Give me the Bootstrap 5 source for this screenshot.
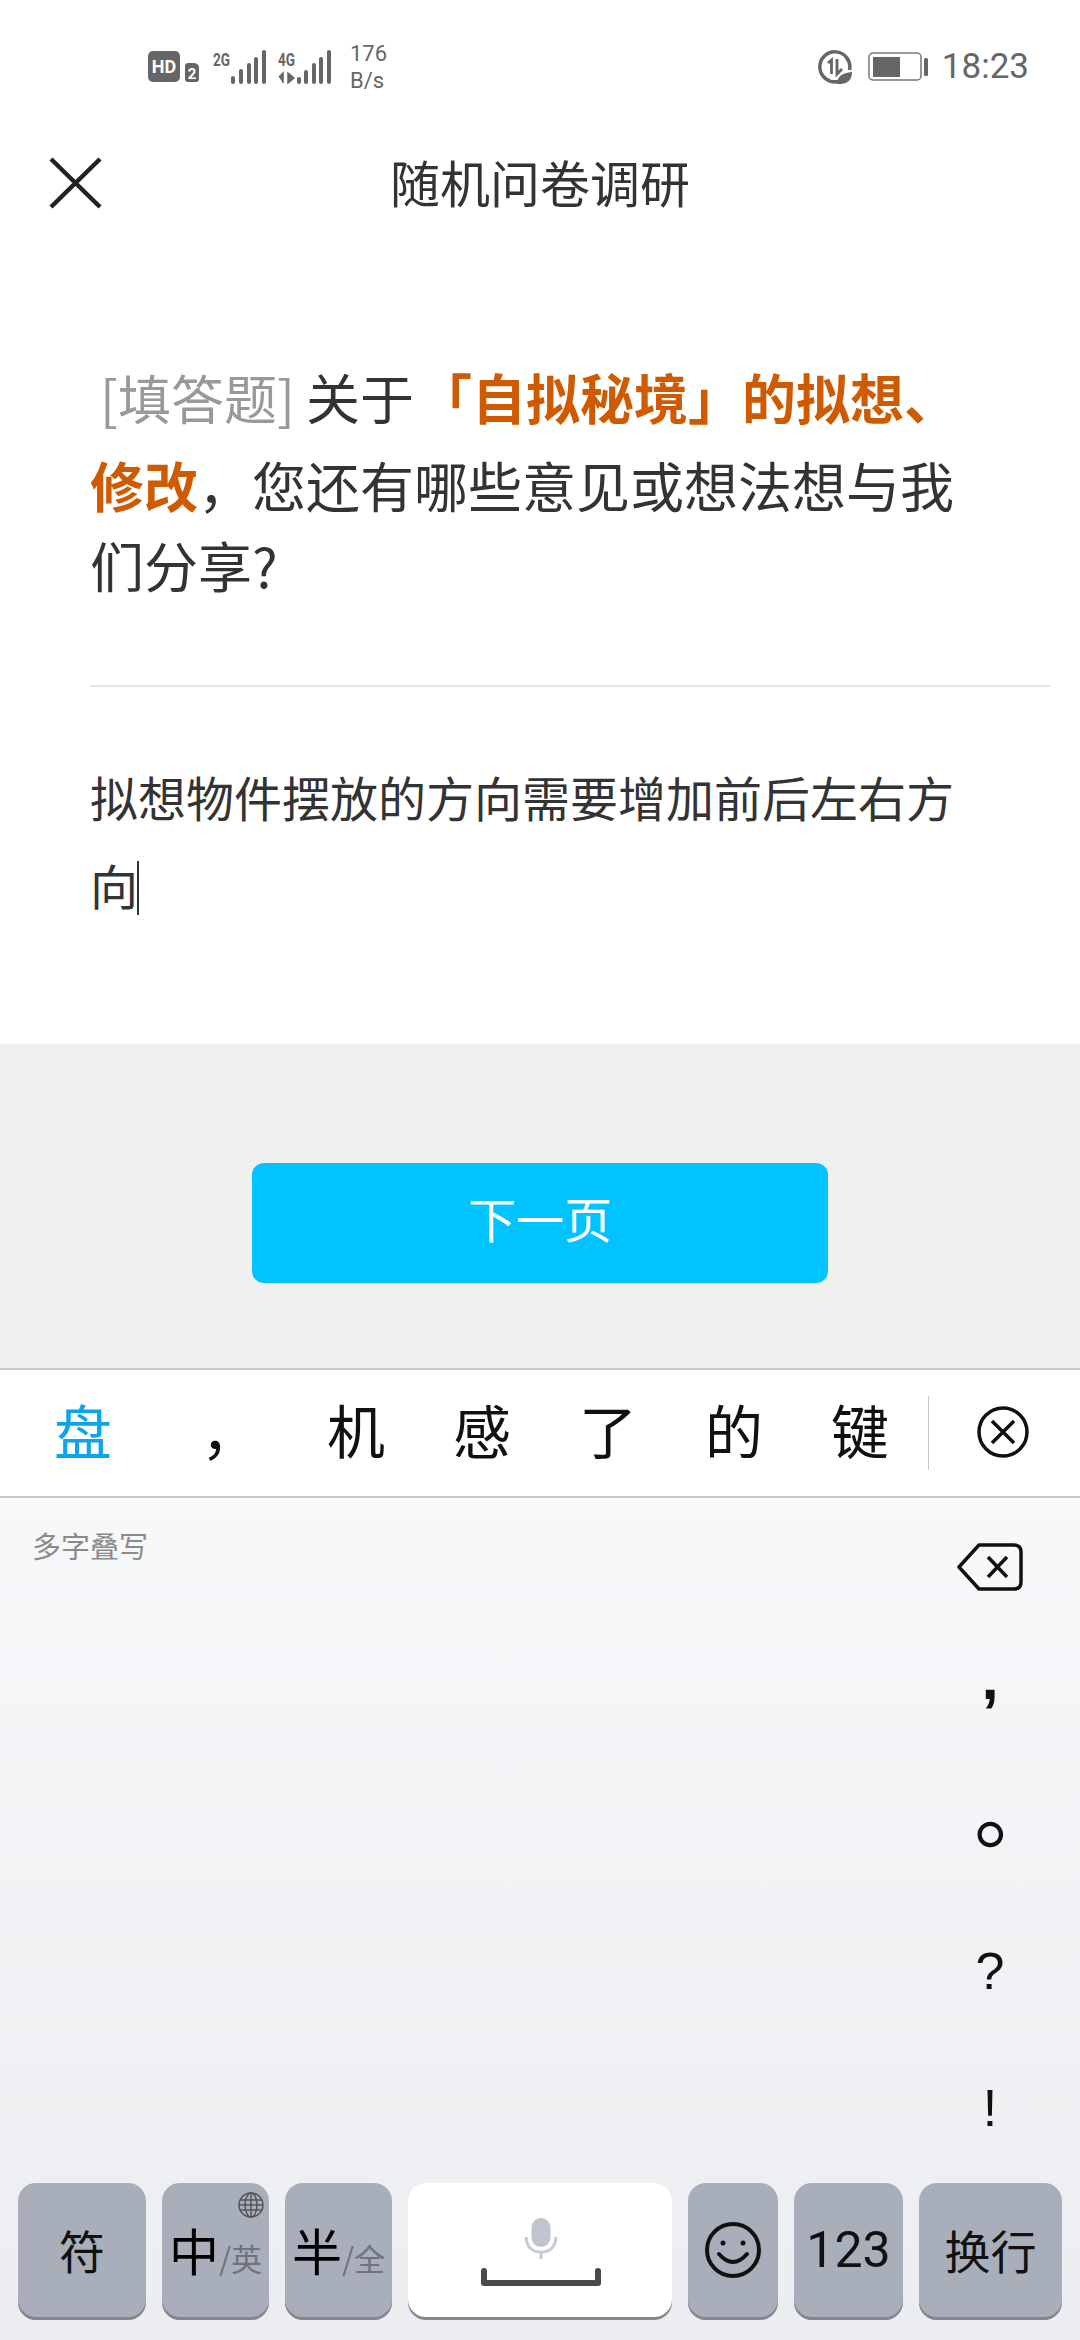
<!DOCTYPE html>
<html lang="zh">
<head>
  <meta charset="UTF-8">
  <meta name="viewport" content="width=device-width, initial-scale=1.0">
  <title>随机问卷调研</title>
  <link href="https://cdn.jsdelivr.net/npm/bootstrap@5.3.0/dist/css/bootstrap.min.css" rel="stylesheet">
  <style>
    html, body { width: 1080px; height: 2340px; overflow: hidden; }
    body { font-family: "Noto Sans CJK SC", "Liberation Sans", sans-serif; background: #fff; color: #333; }
    .status-row { height: 90px; padding: 44px 51px 0 148px; color: #666; }
    .net-speed { font: 22px/27px Roboto, sans-serif; width: 50px; margin-left: 19px; }
    .clock { font: 35px/40px Roboto, sans-serif; margin-left: 14px; }
    .head-row { height: 266px; padding: 0 0 0 48px; align-items: flex-start; position: relative; }
    .head-title { font-size: 50px; line-height: 60px; position: absolute; left: 0; right: 0; top: 61px; text-align: center; color: #333; }
    .close-ico { margin-top: 67px; }
    .quiz-text { font-size: 54px; line-height: 88px; width: 900px; margin-left: 90px; height: 329px; margin-top: -3px; margin-bottom: 3px; }
    .first-line { word-spacing: -1px; }
    .tag-gray { color: #999; padding-left: 10px; font-size: 53px; }
    .tag-hot { color: #cf5a00; font-weight: 700; }
    .hot-lead { margin-left: -7px; }
    .last-line { display: block; margin-top: -8px; }
    .split-line { height: 2px; background: #e6e6e6; margin: 0 30px 0 90px; }
    .answer-box { height: 357px; padding: 65px 0 0 90px; font-size: 48px; line-height: 88px; }
    .caret-bar { display: inline-block; width: 2px; height: 54px; background: #333; vertical-align: -10px; margin-left: -1px; }
    .action-zone { height: 324px; background: #f0f0f0; padding-top: 119px; }
    .next-btn { width: 576px; height: 120px; background: #00c3ff; color: #fff; border: 0; border-radius: 12px; font-size: 48px; line-height: 1; padding-bottom: 18px; }
    .cand-row { height: 130px; background: #fff; border-top: 2px solid #c8c8c8; border-bottom: 2px solid #c8c8c8; padding-left: 20px; }
    .cand-word { width: 126px; text-align: center; font-size: 58px; line-height: 118px; height: 126px; color: #111; }
    .cand-first { color: #0aa5ee; margin-right: 21px; }
    .cand-sep { width: 1px; height: 74px; background: #c8c8c8; margin-left: 5px; }
    .cand-close { margin-left: 48px; margin-top: -2px; }
    .kb-zone { height: 842px; background: linear-gradient(#f7f8fa, #ecedf0); position: relative; }
    .hint-label { font-size: 29px; line-height: 34px; color: #8a8a8a; padding: 30px 0 0 32px; }
    .punct-col { position: absolute; top: 0; right: 0; width: 180px; text-align: center; }
    .punct-item { height: 137px; font: 52px/137px "Liberation Sans", sans-serif; color: #111; }
    .punct-comma { font-weight: 700; font-size: 62px; line-height: 86px; }
    .punct-stop { font-family: "Noto Sans CJK SC", sans-serif; font-size: 84px; line-height: 68px; padding-left: 52px; }
    .punct-ask, .punct-bang { line-height: 124px; }
    .key-row { position: absolute; left: 18px; top: 685px; gap: 16px; }
    .kb-key { height: 137px; background: #a8afbb; border-radius: 18px; box-shadow: inset 0 -3px 0 #85878d; font-size: 46px; color: #111; position: relative; padding-bottom: 4px; }
    .kb-key small { font-size: 31px; color: #6e737c; }
    .kb-key em { font-style: normal; font-size: 50px; color: #000; }
    .key-white { background: #fff; padding-bottom: 0; padding-left: 2px; }
    .key-digits { font: 50px Roboto, sans-serif; }
    .globe-ico { position: absolute; top: 8px; right: 4px; }
    .w-sym { width: 128px; } .w-lang { width: 107px; } .w-space { width: 264px; }
    .w-emoji { width: 90px; } .w-num { width: 109px; } .w-enter { width: 143px; }
  </style>
</head>
<body>
  <div class="d-flex align-items-center status-row">
    <svg width="51" height="32" viewBox="0 0 51 32">
      <rect x="0" y="0" width="32" height="31" rx="5" fill="#666"/>
      <text x="16" y="22" text-anchor="middle" font-family="Roboto" font-weight="700" font-size="18" fill="#fff">HD</text>
      <path d="M37 15q0-3 3-3h5q6 0 6 5v11q0 3-3 3h-8q-3 0-3-3z" fill="#666"/>
      <text x="44" y="28" text-anchor="middle" font-family="Roboto" font-weight="700" font-size="15" fill="#fff">2</text>
    </svg>
    <svg class="svg-net" style="margin-left:14px" width="53" height="34" viewBox="0 0 53 34" fill="#666">
      <text x="0" y="16" font-family="Roboto" font-weight="700" font-size="18" textLength="17" lengthAdjust="spacingAndGlyphs">2G</text>
      <rect x="18" y="26" width="4" height="8" rx="2"/><rect x="26" y="19" width="4" height="15" rx="2"/><rect x="34" y="13" width="4" height="21" rx="2"/><rect x="41" y="7" width="4" height="27" rx="2"/><rect x="49" y="0" width="4" height="34" rx="2"/>
    </svg>
    <svg style="margin-left:12px" width="53" height="34" viewBox="0 0 53 34" fill="#666">
      <text x="0" y="16" font-family="Roboto" font-weight="700" font-size="18" textLength="17" lengthAdjust="spacingAndGlyphs">4G</text>
      <path d="M5 33v-10l-4 4M1 27h5M10 23v10l6-5z" fill="#666" stroke="#666" stroke-width="1.5"/>
      <rect x="19" y="27" width="4" height="7" rx="2"/><rect x="26" y="20" width="4" height="14" rx="2"/><rect x="34" y="13" width="4" height="21" rx="2"/><rect x="41" y="7" width="4" height="27" rx="2"/><rect x="49" y="0" width="4" height="34" rx="2"/>
    </svg>
    <div class="net-speed">176<br>B/s</div>
    <div class="ms-auto d-flex align-items-center">
      <svg width="34" height="34" viewBox="0 0 34 34">
        <path d="M20 31.5A15 15 0 1 1 31.5 20" fill="none" stroke="#666" stroke-width="3.5"/>
        <path d="M10 13l3.5-3v14M19 9v15l5-5" fill="none" stroke="#666" stroke-width="2.8"/>
        <path d="M19 34q0-11 15-12q0 11-11 12z" fill="#666"/>
      </svg>
      <svg style="margin-left:16px" width="60" height="30" viewBox="0 0 60 30">
        <rect x="1" y="1" width="52" height="27" rx="4" fill="none" stroke="#777" stroke-width="1.5"/>
        <rect x="5" y="5" width="27" height="20" fill="#666"/>
        <rect x="56" y="6" width="4" height="18" rx="1.5" fill="#666"/>
      </svg>
      <span class="clock">18:23</span>
    </div>
  </div>

  <div class="d-flex head-row">
    <svg class="close-ico" width="54" height="54" viewBox="0 0 54 54"><path d="M3 2L52 50M52 2L3 50" stroke="#222" stroke-width="4.5" fill="none"/></svg>
    <div class="head-title">随机问卷调研</div>
  </div>

  <div class="quiz-text"><span class="first-line"><span class="tag-gray">[填答题]</span> 关于 <span class="tag-hot hot-lead">「自拟秘境」的拟想、</span></span><br><span class="tag-hot">修改</span>，您还有哪些意见或想法想与我<span class="last-line">们分享?</span></div>
  <div class="split-line"></div>
  <div class="answer-box">拟想物件摆放的方向需要增加前后左右方<br>向<span class="caret-bar"></span></div>

  <div class="action-zone d-flex justify-content-center align-items-start">
    <button type="button" class="btn next-btn">下一页</button>
  </div>

  <div class="d-flex align-items-center cand-row">
    <div class="cand-word cand-first">盘</div>
    <div class="cand-word">，</div>
    <div class="cand-word">机</div>
    <div class="cand-word">感</div>
    <div class="cand-word">了</div>
    <div class="cand-word">的</div>
    <div class="cand-word">键</div>
    <div class="cand-sep"></div>
    <svg class="cand-close" width="52" height="52" viewBox="0 0 52 52"><circle cx="26" cy="26" r="24" fill="none" stroke="#111" stroke-width="3.5"/><path d="M15 15L37 37M37 15L15 37" stroke="#111" stroke-width="3.5"/></svg>
  </div>

  <div class="kb-zone">
    <div class="hint-label">多字叠写</div>
    <div class="punct-col">
      <div class="punct-item d-flex justify-content-center align-items-center">
        <svg width="66" height="48" viewBox="0 0 66 48"><path d="M22 2H57Q64 2 64 9V39Q64 46 57 46H22L2 24Z" fill="none" stroke="#111" stroke-width="3.5" stroke-linejoin="round"/><path d="M31 14L50 34M50 14L31 34" stroke="#111" stroke-width="3.5"/></svg>
      </div>
      <div class="punct-item punct-comma">,</div>
      <div class="punct-item punct-stop">。</div>
      <div class="punct-item punct-ask">?</div>
      <div class="punct-item punct-bang">!</div>
    </div>
    <div class="d-flex key-row">
      <div class="kb-key w-sym d-flex justify-content-center align-items-center">符</div>
      <div class="kb-key w-lang d-flex justify-content-center align-items-center">
        <svg class="globe-ico" width="28" height="28" viewBox="0 0 28 28" fill="none" stroke="#555" stroke-width="1.5"><circle cx="14" cy="14" r="12"/><ellipse cx="14" cy="14" rx="6" ry="12"/><path d="M14 2V26M3 9H25M3 19H25M2 14H26"/></svg>
        <span><em>中</em><small>/英</small></span>
      </div>
      <div class="kb-key w-lang d-flex justify-content-center align-items-center"><span><em>半</em><small>/全</small></span></div>
      <div class="kb-key key-white w-space d-flex flex-column justify-content-center align-items-center">
        <svg width="122" height="68" viewBox="0 0 122 68">
          <rect x="51.5" y="0" width="19" height="29" rx="9.5" fill="#c0c4cf"/>
          <path d="M46 19q1 15 15 15t15-15M61 34v7" fill="none" stroke="#c8cbd3" stroke-width="3"/>
          <path d="M4 53V65H118V53" fill="none" stroke="#4a4a4a" stroke-width="6" stroke-linecap="round" stroke-linejoin="round"/>
        </svg>
      </div>
      <div class="kb-key w-emoji d-flex justify-content-center align-items-center">
        <svg width="58" height="58" viewBox="0 0 58 58" fill="none" stroke="#111" stroke-width="4"><circle cx="29" cy="29" r="26"/><path d="M15 33q14 16 28 0" stroke-linecap="round"/><circle cx="19" cy="22" r="2.5" fill="#111" stroke="none"/><circle cx="39" cy="22" r="2.5" fill="#111" stroke="none"/></svg>
      </div>
      <div class="kb-key w-num key-digits d-flex justify-content-center align-items-center">123</div>
      <div class="kb-key w-enter d-flex justify-content-center align-items-center">换行</div>
    </div>
  </div>
  <script src="https://cdn.jsdelivr.net/npm/bootstrap@5.3.0/dist/js/bootstrap.bundle.min.js"></script>
</body>
</html>
